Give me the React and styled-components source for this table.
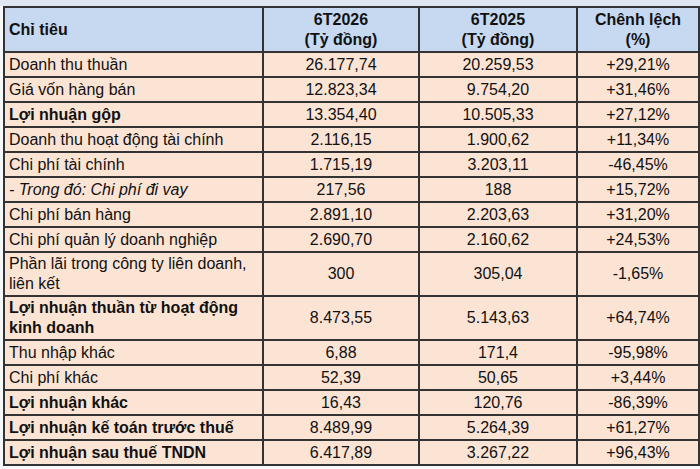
import React from "react";
import styled, { createGlobalStyle } from "styled-components";

const Global = createGlobalStyle`
  html, body { margin: 0; padding: 0; background: #fafafa; }
  body { font-family: "Liberation Sans", Arial, sans-serif; color: #111; }
`;

const Page = styled.div`
  width: 700px;
  height: 469px;
  overflow: hidden;
  background: #f7f8fa;
  padding: 6px 0 0 3px;
  box-sizing: border-box;
  background-image: linear-gradient(#dfe7f2, #dfe7f2);
  background-size: 100% 6px;
  background-repeat: no-repeat;
`;

const Table = styled.table`
  border-collapse: collapse;
  table-layout: fixed;
  width: 695px;
  font-size: 16px;
  line-height: 20px;
`;

const HeadCell = styled.th`
  background: #c6d9f1;
  border: 2px solid #333;
  height: 43px;
  padding: 0 4px;
  font-weight: bold;
  text-align: ${(p) => (p.$left ? "left" : "center")};
  vertical-align: middle;
  color: #111;
`;

const Cell = styled.td`
  background: #fce4d5;
  border: 2px solid #333;
  height: ${(p) => (p.$tall ? "42px" : "23px")};
  padding: 0 4px;
  text-align: ${(p) => (p.$left ? "left" : "center")};
  font-weight: ${(p) => (p.$bold ? "bold" : "normal")};
  font-style: ${(p) => (p.$italic ? "italic" : "normal")};
  vertical-align: middle;
  color: #111;
  white-space: normal;
`;

const rows = [
  ["Doanh thu thuần", "26.177,74", "20.259,53", "+29,21%"],
  ["Giá vốn hàng bán", "12.823,34", "9.754,20", "+31,46%"],
  ["Lợi nhuận gộp", "13.354,40", "10.505,33", "+27,12%", "b"],
  ["Doanh thu hoạt động tài chính", "2.116,15", "1.900,62", "+11,34%"],
  ["Chi phí tài chính", "1.715,19", "3.203,11", "-46,45%"],
  ["- Trong đó: Chi phí đi vay", "217,56", "188", "+15,72%", "i"],
  ["Chi phí bán hàng", "2.891,10", "2.203,63", "+31,20%"],
  ["Chi phí quản lý doanh nghiệp", "2.690,70", "2.160,62", "+24,53%"],
  ["Phần lãi trong công ty liên doanh, liên kết", "300", "305,04", "-1,65%", "t"],
  ["Lợi nhuận thuần từ hoạt động kinh doanh", "8.473,55", "5.143,63", "+64,74%", "bt"],
  ["Thu nhập khác", "6,88", "171,4", "-95,98%"],
  ["Chi phí khác", "52,39", "50,65", "+3,44%"],
  ["Lợi nhuận khác", "16,43", "120,76", "-86,39%", "b"],
  ["Lợi nhuận kế toán trước thuế", "8.489,99", "5.264,39", "+61,27%", "b"],
  ["Lợi nhuận sau thuế TNDN", "6.417,89", "3.267,22", "+96,43%", "b"],
];

export default function App() {
  return (
    <>
      <Global />
      <Page>
        <Table>
          <colgroup>
            <col style={{ width: 259 }} />
            <col style={{ width: 156 }} />
            <col style={{ width: 158 }} />
            <col style={{ width: 122 }} />
          </colgroup>
          <thead>
            <tr>
              <HeadCell $left>Chỉ tiêu</HeadCell>
              <HeadCell>6T2026<br />(Tỷ đồng)</HeadCell>
              <HeadCell>6T2025<br />(Tỷ đồng)</HeadCell>
              <HeadCell>Chênh lệch<br />(%)</HeadCell>
            </tr>
          </thead>
          <tbody>
            {rows.map(([name, a, b, c, f = ""]) => {
              const tall = f.includes("t");
              return (
                <tr key={name}>
                  <Cell $left $tall={tall} $bold={f.includes("b")} $italic={f.includes("i")}>{name}</Cell>
                  <Cell $tall={tall}>{a}</Cell>
                  <Cell $tall={tall}>{b}</Cell>
                  <Cell $tall={tall}>{c}</Cell>
                </tr>
              );
            })}
          </tbody>
        </Table>
      </Page>
    </>
  );
}
